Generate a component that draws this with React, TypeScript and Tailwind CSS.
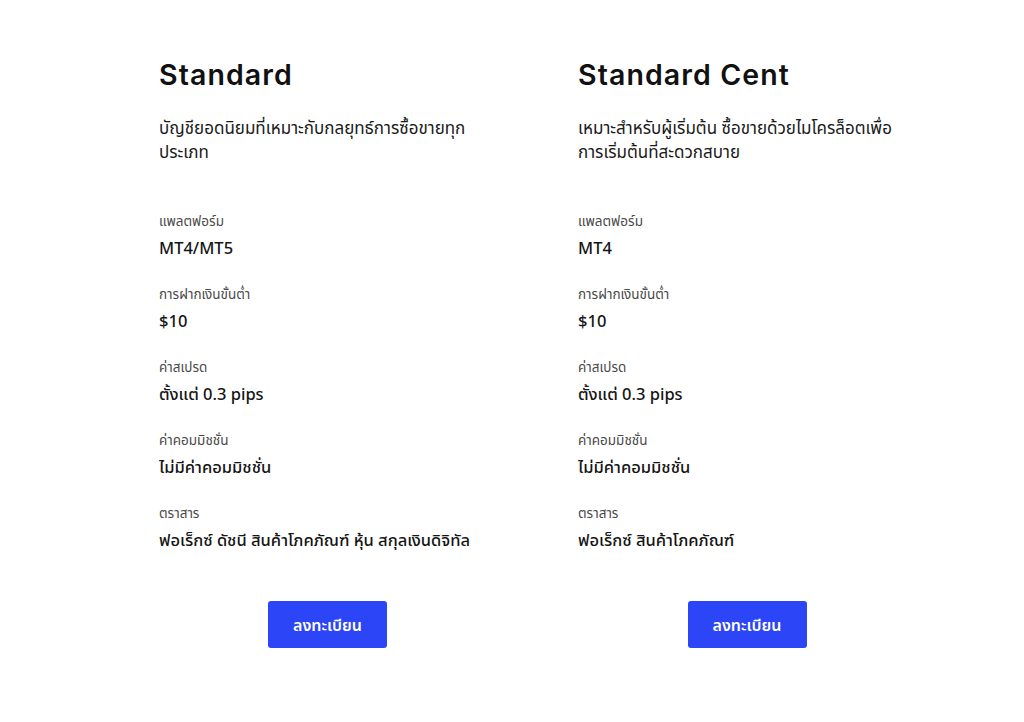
import React from "react";

const thai = { fontFamily: '"Noto Sans", "Noto Sans Thai", "Noto Sans Thai UI", Loma, "Liberation Sans", sans-serif' };
const head = { fontFamily: 'Inter, "Noto Sans", sans-serif' };

interface Row {
  label: string;
  value: string;
}

interface Plan {
  name: string;
  description: string;
  rows: Row[];
}

const plans: Plan[] = [
  {
    name: "Standard",
    description: "บัญชียอดนิยมที่เหมาะกับกลยุทธ์การซื้อขายทุกประเภท",
    rows: [
      { label: "แพลตฟอร์ม", value: "MT4/MT5" },
      { label: "การฝากเงินขั้นต่ำ", value: "$10" },
      { label: "ค่าสเปรด", value: "ตั้งแต่ 0.3 pips" },
      { label: "ค่าคอมมิชชั่น", value: "ไม่มีค่าคอมมิชชั่น" },
      { label: "ตราสาร", value: "ฟอเร็กซ์ ดัชนี สินค้าโภคภัณฑ์ หุ้น สกุลเงินดิจิทัล" },
    ],
  },
  {
    name: "Standard Cent",
    description: "เหมาะสำหรับผู้เริ่มต้น ซื้อขายด้วยไมโครล็อตเพื่อการเริ่มต้นที่สะดวกสบาย",
    rows: [
      { label: "แพลตฟอร์ม", value: "MT4" },
      { label: "การฝากเงินขั้นต่ำ", value: "$10" },
      { label: "ค่าสเปรด", value: "ตั้งแต่ 0.3 pips" },
      { label: "ค่าคอมมิชชั่น", value: "ไม่มีค่าคอมมิชชั่น" },
      { label: "ตราสาร", value: "ฟอเร็กซ์ สินค้าโภคภัณฑ์" },
    ],
  },
];

const PlanColumn = ({ plan }: { plan: Plan }) => (
  <div className="flex flex-col">
    <h2 style={head} className="text-[28.5px] leading-[36px] font-semibold tracking-[1.1px] text-[#111111]">
      {plan.name}
    </h2>
    <p style={thai} className="mt-[23px] w-[325px] text-[17px] leading-[24px] text-[#1a1a1a] h-[48px]">
      {plan.description}
    </p>
    <div className="mt-[47px] flex flex-col gap-[25px]">
      {plan.rows.map((row) => (
        <div key={row.label} className="flex flex-col">
          <span style={thai} className="text-[13.5px] leading-[20px] text-[#4a4a4a]">
            {row.label}
          </span>
          <span style={thai} className="mt-[6px] text-[16.5px] leading-[22px] font-medium text-[#151515]">
            {row.value}
          </span>
        </div>
      ))}
    </div>
    <div className="mt-[50px] flex justify-center">
      <button
        style={thai}
        className="w-[119px] h-[47px] rounded-[3px] bg-[#2b45f7] text-white text-[16px] font-semibold"
      >
        ลงทะเบียน
      </button>
    </div>
  </div>
);

export default function App() {
  return (
    <div className="min-h-[722px] w-full bg-white">
      <div className="grid grid-cols-[337px_338px] gap-x-[82px] pl-[159px] pt-[57px]">
        {plans.map((p) => (
          <PlanColumn key={p.name} plan={p} />
        ))}
      </div>
    </div>
  );
}
